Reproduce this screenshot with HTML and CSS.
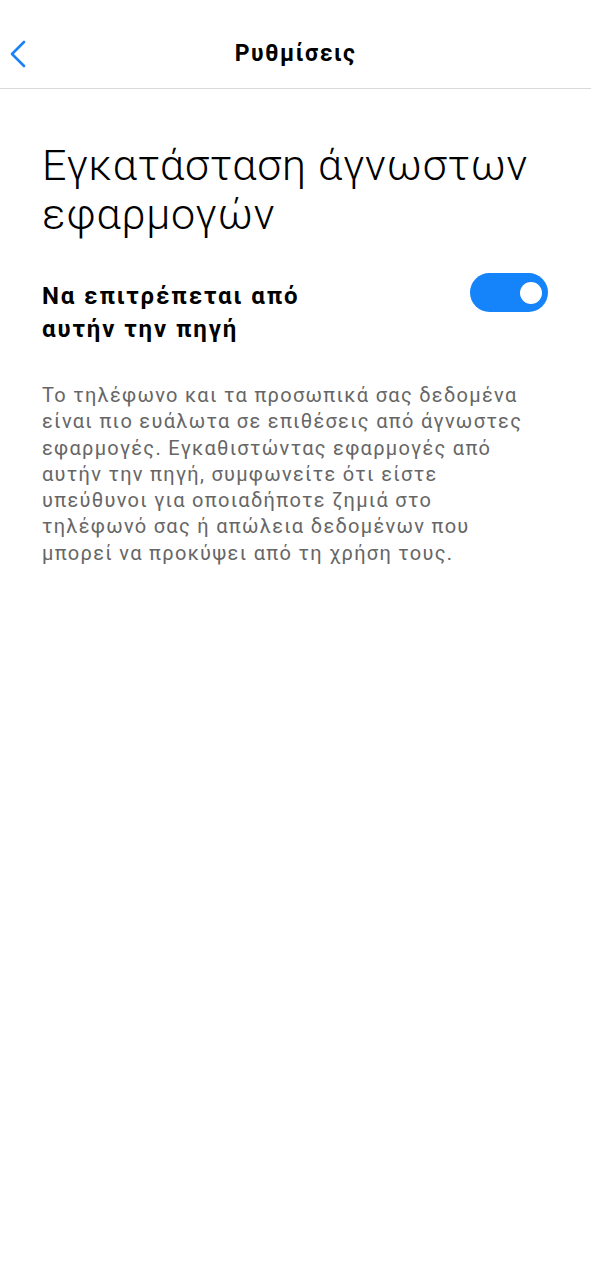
FILE: index.html
```html
<!DOCTYPE html>
<html lang="el">
<head>
<meta charset="utf-8">
<link rel="stylesheet" href="styles.css">
</head>
<body>
<header class="topbar">
  <button class="back" aria-label="Πίσω">
    <svg width="20" height="30" viewBox="0 0 20 30"><path d="M16 3 L4 15 L16 27" fill="none" stroke="#1a82f7" stroke-width="2.6" stroke-linecap="round" stroke-linejoin="round"/></svg>
  </button>
  <h1 class="topbar-title">Ρυθμίσεις</h1>
</header>
<main class="content">
  <h2 class="page-title">Εγκατάσταση άγνωστων εφαρμογών</h2>
  <div class="setting-row">
    <div class="setting-label">Να επιτρέπεται από αυτήν την πηγή</div>
    <div class="toggle"><span class="knob"></span></div>
  </div>
  <p class="desc">Το τηλέφωνο και τα προσωπικά σας δεδομένα είναι πιο ευάλωτα σε επιθέσεις από άγνωστες εφαρμογές. Εγκαθιστώντας εφαρμογές από αυτήν την πηγή, συμφωνείτε ότι είστε υπεύθυνοι για οποιαδήποτε ζημιά στο τηλέφωνό σας ή απώλεια δεδομένων που μπορεί να προκύψει από τη χρήση τους.</p>
</main>
</body>
</html>
```

FILE: styles.css
```css
* { box-sizing: border-box; }
html, body { margin: 0; padding: 0; background: #fff; }
body { font-family: Roboto, "Noto Sans", sans-serif; color: #000; width: 591px; }
.topbar {
  height: 89px;
  border-bottom: 1px solid #d9d9d9;
  display: flex;
  align-items: flex-start;
  justify-content: center;
  padding-top: 39px;
  position: relative;
}
.back {
  position: absolute;
  left: 8px;
  top: 39px;
  background: none;
  border: 0;
  padding: 0;
  width: 24px;
  height: 30px;
  display: flex;
}
.topbar-title {
  margin: 0;
  font-size: 23px;
  font-weight: 700;
  line-height: 30px;
  letter-spacing: 1.5px;
}
.content { padding: 0 38px 0 42px; }
.page-title {
  margin: 52px 0 0 0;
  font-size: 43px;
  font-weight: 300;
  line-height: 49px;
  letter-spacing: 0.8px;
}
.setting-row {
  display: flex;
  justify-content: space-between;
  align-items: flex-start;
  margin-top: 34px;
}
.setting-label {
  font-size: 24px;
  font-weight: 700;
  line-height: 33px;
  width: 290px;
  letter-spacing: 1.9px;
  padding-top: 7px;
}
.toggle {
  width: 78px;
  height: 39px;
  border-radius: 20px;
  background: #1583fa;
  display: flex;
  align-items: center;
  justify-content: flex-end;
  padding-right: 6px;
  margin-right: 5px;
}
.knob {
  width: 22px;
  height: 22px;
  border-radius: 50%;
  background: #fff;
}
.desc {
  margin: 36px 25px 0 0;
  font-size: 20px;
  line-height: 26.3px;
  color: #666;
  letter-spacing: 1.3px;
}
```
